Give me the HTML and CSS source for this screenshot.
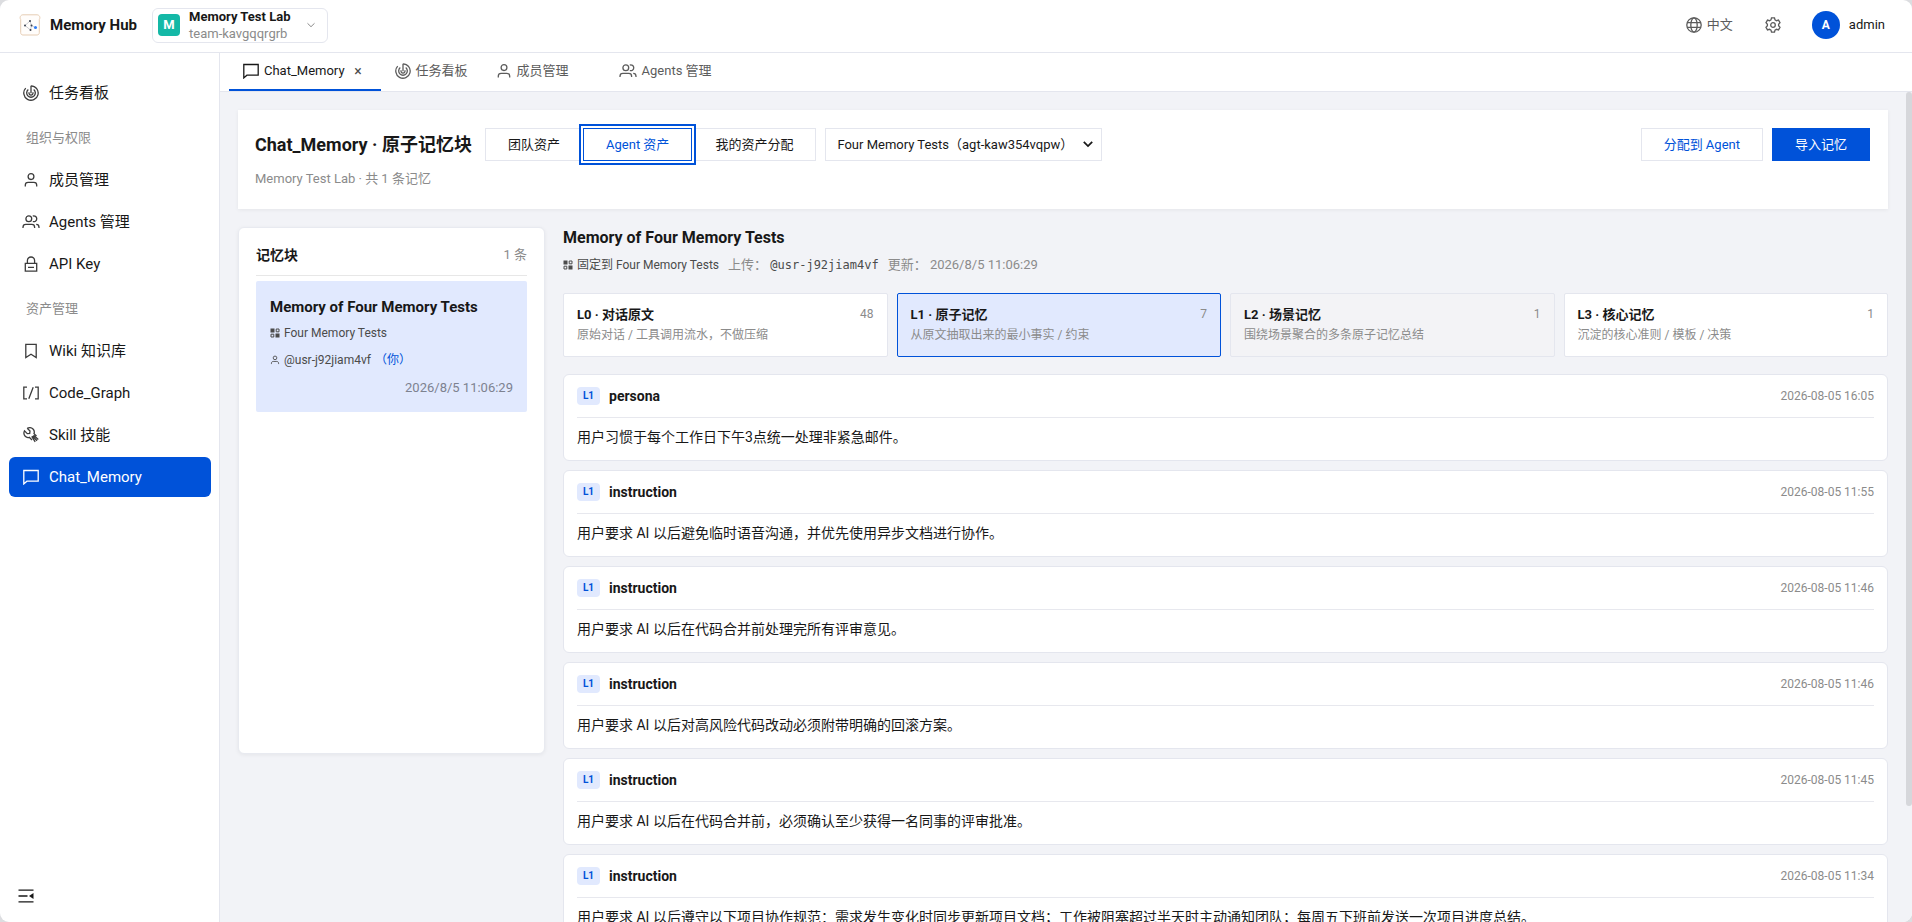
FILE: index.html
```html
<!DOCTYPE html>
<html lang="zh-CN">
<head>
  <meta charset="UTF-8" />
  <meta name="viewport" content="width=device-width, initial-scale=1.0"/>
  <title>Memory Hub | Chat_Memory</title>
  <link rel="stylesheet" href="styles.css">
</head>

<body>
  <!-- 图标 -->
  <svg class="sprite" aria-hidden="true">
    <symbol id="i-board" viewBox="0 0 16 16">
      <path d="M8 .8v7.400M8 .8a7.200 7.200 0 1 1-5.300 2.300M13.300 3.100a7.200 7.200 0 0 1 1.900 4.900M5.300 4.600a4.300 4.300 0 1 0 5.400 0"/>
      <path d="M6.200 7.200a2 2 0 1 0 3.600 0"/>
    </symbol>
    <symbol id="i-user" viewBox="0 0 16 16">
      <circle cx="8" cy="4.6" r="2.9"/>
      <path d="M2.3 14.5v-1.4c0-1.6 1.2-2.8 2.8-2.8h5.8c1.6 0 2.8 1.2 2.8 2.8v1.4"/>
    </symbol>
    <symbol id="i-group" viewBox="0 0 18 16">
      <circle cx="6.8" cy="4.8" r="2.9"/>
      <path d="M1 14v-.8c0-1.6 1.2-2.8 2.8-2.8h6c1.6 0 2.8 1.2 2.8 2.8v.8M10.8 2.1a2.9 2.9 0 1 1 0 5.4M14.2 10.4c1.6 0 2.8 1.2 2.8 2.8v.8"/>
    </symbol>
    <symbol id="i-lock" viewBox="0 0 16 16">
      <path d="M2.3 7.3h11.4v7.9H2.3zM4.4 7.3V4.6a3.6 3.6 0 0 1 7.2 0v2.7M5 11.3h6"/>
    </symbol>
    <symbol id="i-bookmark" viewBox="0 0 16 16">
      <path d="M2.8 1.3h10.4v13.2L8 11.3l-5.2 3.2z"/>
    </symbol>
    <symbol id="i-code" viewBox="0 0 16 16">
      <path d="M4 2.2H.8v11.6H4M12 2.2h3.2v11.6H12M10.2 2.2 5.8 13.8"/>
    </symbol>
    <symbol id="i-tools" viewBox="0 0 16 16">
      <path d="M4.200 1.300 7 4 6.700 6.300 4.300 6.600 1.500 3.900C.5 6 .8 7.900 2.200 9.300c1.200 1.200 2.700 1.500 4.100 1L9 13M4.200 1.300C6.400.3 8.600.6 10 2c1.300 1.300 1.600 3 1 4.600L13.500 9M8.700 9.300l3.500 5.500M10.600 8.300l4.700 4.200M9.600 9l4.400 4.700"/>
    </symbol>
    <symbol id="i-chat" viewBox="0 0 16 16">
      <path d="M.8 1.500h14.400v10.700H3.900L.8 14.900z"/>
    </symbol>
    <symbol id="i-down" viewBox="0 0 10 10">
      <path d="m1.500 3.300 3.500 3.400 3.500-3.400"/>
    </symbol>
    <symbol id="i-globe" viewBox="0 0 16 16">
      <circle cx="8" cy="8" r="7.200"/>
      <ellipse cx="8" cy="8" rx="3.200" ry="7.200"/>
      <path d="M1.200 5.700h13.600M1.200 10.300h13.600"/>
    </symbol>
    <symbol id="i-setting" viewBox="0 0 16 16">
      <path d="M6.500.8h3l.5 2 1.500.9 2-.6 1.500 2.600L13.600 7.200v1.600l1.400 1.500-1.500 2.600-2-.6-1.500.9-.5 2h-3l-.5-2-1.500-.9-2 .6L1 10.300l1.400-1.500V7.200L1 5.700l1.500-2.600 2 .6L6 2.800z"/>
      <circle cx="8" cy="8" r="2.300"/>
    </symbol>
    <symbol id="i-app" viewBox="0 0 10 10">
      <path class="solid" d="M.5.5h4v4h-4zM5.500 5.500h4v4h-4z"/>
      <path d="M6.200 1h2.800v2.800H6.200zM1 6.200h2.800V9H1z"/>
    </symbol>
    <symbol id="i-fold" viewBox="0 0 16 16">
      <path d="M.5 2.200h15M.5 8h9M.5 13.800h15"/>
      <path class="solid" d="M15.500 5v6L11 8z"/>
    </symbol>
  </svg>

  <div class="app">
    <!-- 顶部栏 -->
    <header class="header">
      <svg class="logo" viewBox="0 0 22 22" aria-hidden="true">
        <path class="logo-frame" d="M4 .8h14c2.500 0 3.700 2.800 2.300 4.700v13.200c0 1.400-1 2.300-2.300 2.300H4c-1.300 0-2.300-.9-2.300-2.300V5.500C.3 3.600 1.500.8 4 .8z"/>
        <path class="logo-lines" d="m6 11.500 5-4.500 1.500 4.500 3.500 2M6 11.500l5.500 4.500 1-4.500"/>
        <circle class="logo-dot" cx="6" cy="11.500" r="1"/>
        <circle class="logo-dot" cx="11" cy="7" r="1"/>
        <circle class="logo-dot" cx="11.500" cy="16" r="1"/>
        <circle class="logo-dot" cx="12.500" cy="11.500" r="1"/>
        <circle class="logo-blue" cx="16.500" cy="13.500" r="1.500"/>
      </svg>
      <span class="brand">Memory Hub</span>
      <button class="team" type="button">
        <span class="team-avatar">M</span>
        <span class="team-info">
          <span class="team-name">Memory Test Lab</span>
          <span class="team-id">team-kavgqqrgrb</span>
        </span>
        <svg class="icon-tiny"><use href="#i-down"/></svg>
      </button>

      <div class="header-right">
        <button class="lang" type="button"><svg class="icon"><use href="#i-globe"/></svg>中文</button>
        <button class="setting" type="button" aria-label="设置"><svg class="icon"><use href="#i-setting"/></svg></button>
        <button class="account" type="button"><span class="avatar">A</span>admin</button>
      </div>
    </header>

    <!-- 侧边菜单 -->
    <aside class="sidebar">
      <nav class="menu">
        <a class="menu-item" href="#board"><svg class="icon"><use href="#i-board"/></svg>任务看板</a>
        <div class="menu-label">组织与权限</div>
        <a class="menu-item" href="#members"><svg class="icon"><use href="#i-user"/></svg>成员管理</a>
        <a class="menu-item" href="#agents"><svg class="icon icon-wide"><use href="#i-group"/></svg>Agents 管理</a>
        <a class="menu-item" href="#apikey"><svg class="icon"><use href="#i-lock"/></svg>API Key</a>
        <div class="menu-label">资产管理</div>
        <a class="menu-item" href="#wiki"><svg class="icon"><use href="#i-bookmark"/></svg>Wiki 知识库</a>
        <a class="menu-item" href="#code"><svg class="icon"><use href="#i-code"/></svg>Code_Graph</a>
        <a class="menu-item" href="#skill"><svg class="icon"><use href="#i-tools"/></svg>Skill 技能</a>
        <a class="menu-item active" href="#chat"><svg class="icon"><use href="#i-chat"/></svg>Chat_Memory</a>
      </nav>
      <button class="fold-btn" type="button" aria-label="收起菜单"><svg class="icon"><use href="#i-fold"/></svg></button>
    </aside>

    <div class="workspace">
      <!-- 标签页 -->
      <nav class="tabs">
        <div class="tab active"><a href="#chat"><svg class="icon"><use href="#i-chat"/></svg>Chat_Memory</a><button class="tab-close" type="button">×</button></div>
        <div class="tab"><a href="#board"><svg class="icon"><use href="#i-board"/></svg>任务看板</a></div>
        <div class="tab"><a href="#members"><svg class="icon"><use href="#i-user"/></svg>成员管理</a><button class="tab-close" type="button">×</button></div>
        <div class="tab"><a href="#agents"><svg class="icon icon-wide"><use href="#i-group"/></svg>Agents 管理</a><button class="tab-close" type="button">×</button></div>
      </nav>

      <div class="scroll-area">
        <main class="content">
          <section class="page-head">
            <div class="page-bar">
              <h1>Chat_Memory · 原子记忆块</h1>
              <div class="segment">
                <button class="btn" type="button">团队资产</button>
                <button class="btn selected" type="button">Agent 资产</button>
                <button class="btn" type="button">我的资产分配</button>
              </div>
              <div class="select-wrap">
                <select class="select" aria-label="Agent">
                  <option>Four Memory Tests（agt-kaw354vqpw）</option>
                </select>
                <svg class="icon-tiny"><use href="#i-down"/></svg>
              </div>
              <div class="page-actions">
                <button class="btn link" type="button">分配到 Agent</button>
                <button class="btn primary" type="button">导入记忆</button>
              </div>
            </div>
            <p class="page-sub">Memory Test Lab · 共 1 条记忆</p>
          </section>

          <div class="columns">
            <!-- 记忆块列表 -->
            <section class="blocks">
              <div class="blocks-head">
                <h2>记忆块</h2>
                <span>1 条</span>
              </div>
              <article class="block">
                <h3>Memory of Four Memory Tests</h3>
                <div class="block-row"><svg class="icon-tiny"><use href="#i-app"/></svg>Four Memory Tests</div>
                <div class="block-row"><svg class="icon-tiny thin"><use href="#i-user"/></svg>@usr-j92jiam4vf<span class="you">（你）</span></div>
                <time class="block-time">2026/8/5 11:06:29</time>
              </article>
            </section>

            <!-- 记忆详情 -->
            <section class="detail">
              <h2 class="detail-title">Memory of Four Memory Tests</h2>
              <div class="meta">
                <span class="pinned"><svg class="icon-tiny"><use href="#i-app"/></svg>固定到 Four Memory Tests</span>
                <span>上传： <code>@usr-j92jiam4vf</code></span>
                <span>更新： 2026/8/5 11:06:29</span>
              </div>

              <div class="levels">
                <button class="level" type="button">
                  <span class="level-top"><b>L0 · 对话原文</b><span>48</span></span>
                  <span class="level-desc">原始对话 / 工具调用流水，不做压缩</span>
                </button>
                <button class="level active" type="button">
                  <span class="level-top"><b>L1 · 原子记忆</b><span>7</span></span>
                  <span class="level-desc">从原文抽取出来的最小事实 / 约束</span>
                </button>
                <button class="level hover" type="button">
                  <span class="level-top"><b>L2 · 场景记忆</b><span>1</span></span>
                  <span class="level-desc">围绕场景聚合的多条原子记忆总结</span>
                </button>
                <button class="level" type="button">
                  <span class="level-top"><b>L3 · 核心记忆</b><span>1</span></span>
                  <span class="level-desc">沉淀的核心准则 / 模板 / 决策</span>
                </button>
              </div>

              <div class="memories">
                <article class="memory">
                  <div class="memory-head"><span class="tag">L1</span><h3>persona</h3><time>2026-08-05 16:05</time></div>
                  <p>用户习惯于每个工作日下午3点统一处理非紧急邮件。</p>
                </article>
                <article class="memory">
                  <div class="memory-head"><span class="tag">L1</span><h3>instruction</h3><time>2026-08-05 11:55</time></div>
                  <p>用户要求 AI 以后避免临时语音沟通，并优先使用异步文档进行协作。</p>
                </article>
                <article class="memory">
                  <div class="memory-head"><span class="tag">L1</span><h3>instruction</h3><time>2026-08-05 11:46</time></div>
                  <p>用户要求 AI 以后在代码合并前处理完所有评审意见。</p>
                </article>
                <article class="memory">
                  <div class="memory-head"><span class="tag">L1</span><h3>instruction</h3><time>2026-08-05 11:46</time></div>
                  <p>用户要求 AI 以后对高风险代码改动必须附带明确的回滚方案。</p>
                </article>
                <article class="memory">
                  <div class="memory-head"><span class="tag">L1</span><h3>instruction</h3><time>2026-08-05 11:45</time></div>
                  <p>用户要求 AI 以后在代码合并前，必须确认至少获得一名同事的评审批准。</p>
                </article>
                <article class="memory">
                  <div class="memory-head"><span class="tag">L1</span><h3>instruction</h3><time>2026-08-05 11:34</time></div>
                  <p>用户要求 AI 以后遵守以下项目协作规范：需求发生变化时同步更新项目文档；工作被阻塞超过半天时主动通知团队；每周五下班前发送一次项目进度总结。</p>
                </article>
              </div>
            </section>
          </div>
        </main>
        <div class="scrollbar"><div class="scrollbar-thumb"></div></div>
      </div>
    </div>
  </div>
</body>
</html>
```
FILE: styles.css
```css
* {
  box-sizing: border-box;
}

body {
  margin: 0;
  height: 100vh;
  background-color: #dcdde0;
  font-family: Roboto, "Noto Sans CJK SC", sans-serif;
  font-size: 13px;
  line-height: 20px;
  color: #181818;
}

h1, h2, h3, p {
  margin: 0;
}

button, select {
  font: inherit;
  color: inherit;
  cursor: pointer;
}

a {
  color: inherit;
  text-decoration: none;
}

/* 图标 */
.sprite {
  display: none;
}

.icon, .icon-tiny {
  flex: none;
  width: 16px;
  height: 16px;
  fill: none;
  stroke: currentColor;
  stroke-width: 1.3;
}

.icon-wide {
  width: 18px;
}

.icon-tiny {
  width: 10px;
  height: 10px;
  stroke-width: 1;
}

.thin {
  stroke-width: 1.4;
}

.solid {
  fill: currentColor;
  stroke: none;
}

.app {
  display: grid;
  grid-template-columns: 220px minmax(0, 1fr);
  grid-template-rows: 53px minmax(0, 1fr);
  height: 100%;
  background-color: #fff;
  border-radius: 9px;
  overflow: hidden;
}

/* 顶部栏 */
.header {
  grid-column: 1 / 3;
  display: flex;
  align-items: center;
  padding: 0 27px 2px 19px;
  border-bottom: 1px solid #e4e6ee;
}

.logo {
  width: 22px;
  height: 22px;
  margin-right: 9px;
}

.logo-frame {
  fill: #fffdfb;
  stroke: #e6cdb4;
}

.logo-lines {
  fill: none;
  stroke: #b4b8c0;
  stroke-width: 0.7;
}

.logo-dot {
  fill: #3c4350;
}

.logo-blue {
  fill: #2f7df6;
}

.brand {
  font-size: 15px;
  font-weight: 700;
}

.team {
  display: flex;
  align-items: center;
  width: 176px;
  height: 35px;
  margin-left: 15px;
  padding: 0 11px 0 5px;
  border: 1px solid #e4e6ee;
  border-radius: 6px;
  background-color: #fff;
  text-align: left;
}

.team .icon-tiny {
  margin-left: auto;
  color: #8b8b8b;
}

.team-avatar {
  width: 22px;
  height: 22px;
  margin-right: 9px;
  border-radius: 4px;
  background-color: #14b8a6;
  color: #fff;
  font-weight: 700;
  line-height: 22px;
  text-align: center;
}

.team-info {
  display: flex;
  flex-direction: column;
  line-height: 17px;
}

.team-name {
  font-weight: 700;
}

.team-id {
  color: #8b8b8b;
}

.header-right {
  display: flex;
  align-items: center;
  margin-left: auto;
  color: #5c5c5c;
}

.header-right button {
  display: flex;
  align-items: center;
  padding: 0;
  border: none;
  background: none;
}

.header-right .lang {
  gap: 5px;
}

.setting {
  margin: 0 31px 0 32px;
}

.header-right .account {
  gap: 9px;
  color: #181818;
}

.avatar {
  width: 28px;
  height: 28px;
  border-radius: 50%;
  background-color: #0052d9;
  color: #fff;
  font-size: 12px;
  font-weight: 700;
  line-height: 28px;
}

/* 侧边菜单 */
.sidebar {
  display: flex;
  flex-direction: column;
  justify-content: space-between;
  padding: 20px 8px 18px 9px;
  border-right: 1px solid #e4e6ee;
}

.menu {
  display: flex;
  flex-direction: column;
  gap: 2px;
}

.menu-item {
  display: flex;
  align-items: center;
  gap: 9px;
  height: 40px;
  padding: 0 13px;
  border-radius: 6px;
  font-size: 15px;
}

.menu-item .icon {
  width: 18px;
  height: 16px;
  color: #3c3c3c;
}

.menu-item.active,
.menu-item.active .icon {
  background-color: #0052d9;
  color: #fff;
}

.menu-label {
  height: 43px;
  padding-left: 17px;
  color: #8b8b8b;
  line-height: 46px;
}

.fold-btn {
  display: flex;
  align-self: flex-start;
  margin-left: 9px;
  padding: 0;
  border: none;
  background: none;
}

/* 标签页 */
.workspace {
  display: flex;
  flex-direction: column;
  min-height: 0;
}

.tabs {
  display: flex;
  flex: none;
  height: 39px;
  padding-left: 9px;
  border-bottom: 1px solid #e4e6ee;
}

.tab {
  display: flex;
  align-items: center;
  gap: 5px;
  padding: 0 14px;
  border-bottom: 2px solid transparent;
  color: #5c5c5c;
}

.tab a {
  display: flex;
  align-items: center;
  gap: 5px;
}

.tab.active {
  border-color: #0052d9;
  color: #181818;
}

.tab-close {
  visibility: hidden;
  width: 17px;
  padding: 0;
  border: none;
  background: none;
  color: #4b4b4b;
  font-size: 14px;
  line-height: 16px;
}

.tab.active .tab-close {
  visibility: visible;
}

.scroll-area {
  display: flex;
  flex: 1;
  min-height: 0;
  background-color: #f2f3f7;
}

.content {
  flex: 1;
  min-width: 0;
  padding: 18px 18px 114px;
  overflow-y: auto;
  scrollbar-width: none;
}

.scrollbar {
  flex: none;
  width: 6px;
}

.scrollbar-thumb {
  height: 86%;
  border-radius: 3px;
  background-color: #d6d7db;
}

/* 页头 */
.page-head {
  padding: 18px 18px 18px 17px;
  background-color: #fff;
  box-shadow: 0 1px 4px rgba(0, 0, 0, 0.06);
}

.page-bar {
  display: flex;
  align-items: center;
  gap: 9px;
}

.page-bar h1 {
  margin-right: 4px;
  font-size: 18px;
  line-height: 24px;
}

.page-sub {
  margin-top: 6px;
  color: #8b8b8b;
  line-height: 24px;
}

.segment, .page-actions {
  display: flex;
}

.page-actions {
  gap: 9px;
  margin-left: auto;
}

.btn {
  height: 33px;
  padding: 0 22px;
  border: 1px solid #e4e6ee;
  background-color: #fff;
}

.segment .btn:first-child {
  border-right-color: transparent;
}

.segment .btn:last-child {
  border-left-color: transparent;
}

.segment .selected {
  z-index: 1;
  border-color: #0052d9;
  box-shadow: 0 0 0 2px #fff, 0 0 0 4px #0052d9;
  color: #0052d9;
}

.link {
  color: #0052d9;
}

.primary {
  border-color: #0052d9;
  background-color: #0052d9;
  color: #fff;
}

.select-wrap {
  position: relative;
}

.select {
  width: 277px;
  height: 33px;
  padding: 0 11px;
  border: 1px solid #e4e6ee;
  background-color: #fff;
  appearance: none;
}

.select-wrap .icon-tiny {
  position: absolute;
  top: 10px;
  right: 8px;
  width: 12px;
  height: 12px;
  stroke-width: 1.5;
  pointer-events: none;
}

/* 记忆块列表 */
.columns {
  display: flex;
  align-items: flex-start;
  gap: 18px;
  margin-top: 18px;
}

.blocks {
  flex: none;
  width: 307px;
  height: 527px;
  padding: 9px 17px;
  border: 1px solid #e8eaf0;
  border-radius: 6px;
  background-color: #fff;
  box-shadow: 0 1px 4px rgba(0, 0, 0, 0.06);
}

.blocks-head {
  display: flex;
  align-items: center;
  justify-content: space-between;
  height: 39px;
  margin-bottom: 5px;
  padding-bottom: 2px;
  border-bottom: 1px solid #e7e7e7;
  color: #8b8b8b;
}

.blocks-head h2 {
  color: #181818;
  font-size: 14px;
}

.block {
  padding: 14px 14px 10px;
  border-radius: 2px;
  background-color: #e1e9fe;
}

.block h3 {
  font-size: 15px;
  line-height: 24px;
}

.block-row {
  display: flex;
  align-items: center;
  gap: 4px;
  height: 27px;
  color: #4b4b4b;
  font-size: 12px;
}

.you {
  color: #0052d9;
}

.block-time {
  display: block;
  color: #7d8290;
  line-height: 29px;
  text-align: right;
}

/* 记忆详情 */
.detail {
  flex: 1;
  min-width: 0;
}

.detail-title {
  font-size: 16px;
  line-height: 22px;
}

.meta {
  display: flex;
  align-items: center;
  gap: 9px;
  height: 32px;
  color: #8b8b8b;
}

.pinned {
  display: flex;
  align-items: center;
  gap: 4px;
  color: #4b4b4b;
  font-size: 12px;
}

.meta code {
  color: #4b4b4b;
  font-family: "DejaVu Sans Mono", monospace;
  font-size: 12px;
}

.levels {
  display: grid;
  grid-template-columns: repeat(4, 1fr);
  gap: 9px;
  margin-top: 12px;
}

.level {
  display: flex;
  flex-direction: column;
  height: 64px;
  padding: 10px 13px;
  border: 1px solid #e4e6ee;
  border-radius: 2px;
  background-color: #fff;
  line-height: 21px;
  text-align: left;
}

.level.active {
  border-color: #0052d9;
  background-color: #e1e9fe;
}

.level.hover {
  background-color: #f3f3f6;
}

.level-top {
  display: flex;
  justify-content: space-between;
  width: 100%;
}

.level-top span, .level-desc {
  color: #8b8b8b;
  font-size: 12px;
}

.memories {
  display: flex;
  flex-direction: column;
  gap: 9px;
  margin-top: 17px;
}

.memory {
  height: 87px;
  padding: 0 13px;
  border: 1px solid #e4e6ee;
  border-radius: 6px;
  background-color: #fff;
}

.memory-head {
  display: flex;
  align-items: center;
  gap: 9px;
  height: 43px;
  border-bottom: 1px solid #e7e8ee;
}

.tag {
  width: 23px;
  height: 18px;
  border-radius: 4px;
  background-color: #e1e9fe;
  color: #0052d9;
  font-size: 10px;
  font-weight: 700;
  line-height: 18px;
  text-align: center;
}

.memory h3 {
  font-size: 14px;
}

.memory time {
  margin-left: auto;
  color: #8b8b8b;
  font-size: 12px;
}

.memory p {
  font-size: 14px;
  line-height: 38px;
}
```
